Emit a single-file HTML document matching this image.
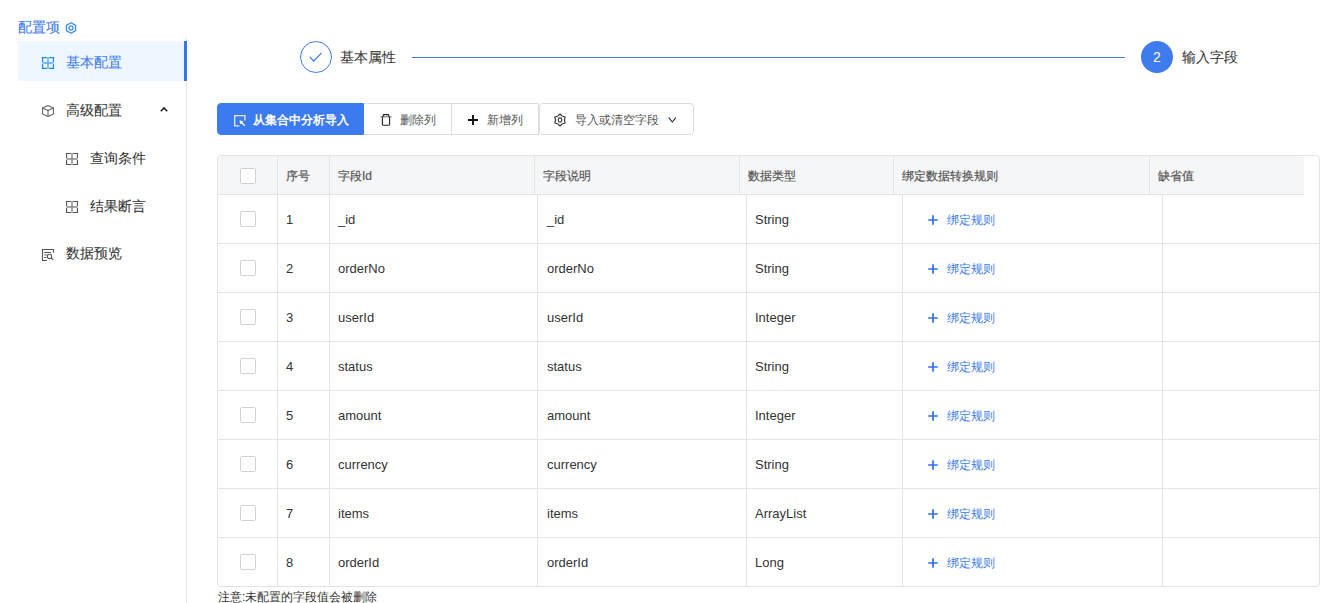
<!DOCTYPE html>
<html><head><meta charset="utf-8">
<style>
*{box-sizing:border-box;margin:0;padding:0}
html,body{width:1332px;height:603px;overflow:hidden;background:#fff;font-family:"Liberation Sans",sans-serif;color:#333}
.abs{position:absolute}
.t{position:absolute;white-space:nowrap;line-height:1}
.ico{position:absolute;overflow:visible}
.mi{font-size:14px;color:#333;-webkit-text-stroke:0.06px currentColor}
.btn{position:absolute;top:103px;height:32px;border:1px solid #dcdcdc;background:#fff}
.hl{position:absolute;background:#e4e4e4}
.th{font-size:12px;color:#555;-webkit-text-stroke:0.2px #555}
.td{font-size:13px;color:#333}
.cb{position:absolute;width:16px;height:16px;border:1px solid #d2d2d2;border-radius:2px;background:#fff}
.link{font-size:12px;color:#3d7bee}
</style></head><body>
<div class="t" style="left:18px;top:20px;font-size:14px;color:#3a7bf0;-webkit-text-stroke:0.1px #3a7bf0">配置项</div>
<svg class="ico" style="left:65px;top:22px" width="12" height="12" viewBox="0 0 12 12"><g fill="none" stroke="#3a8bf5" stroke-width="1.3" stroke-linejoin="round"><path d="M6 0.8 L10.6 3.4 V8.6 L6 11.2 L1.4 8.6 V3.4 Z"/><circle cx="6" cy="6" r="2.1"/></g></svg>
<div class="abs" style="left:18px;top:41px;width:166px;height:40px;background:#eef6ff"></div>
<div class="abs" style="left:186px;top:37px;width:1px;height:566px;background:#e8e8e8"></div>
<div class="abs" style="left:184px;top:41px;width:3px;height:40px;background:#3475f1"></div>
<svg class="ico" style="left:42px;top:57px" width="12" height="12" viewBox="0 0 12 12"><g fill="none" stroke="#1f8cf0" stroke-width="1.3"><path d="M0.55 5.3 V0.55 H5.3 M6.7 0.55 H11.45 V5.3 M11.45 6.7 V11.45 H6.7 M5.3 11.45 H0.55 V6.7"/><path d="M6 0.8 V11.2 M0.8 6 H11.2" stroke-width="1.5" opacity="0.7"/></g></svg>
<div class="t mi" style="left:66px;top:55px;color:#3a7bf0">基本配置</div>
<svg class="ico" style="left:42px;top:105px" width="12" height="12" viewBox="0 0 12 12"><g fill="none" stroke="#666" stroke-width="1.1" stroke-linejoin="round"><path d="M6 0.6 L11.4 3.1 V8.9 L6 11.4 L0.6 8.9 V3.1 Z"/><path d="M0.6 3.1 L6 5.6 L11.4 3.1 M6 5.6 V11.4"/></g></svg>
<div class="t mi" style="left:66px;top:103px">高级配置</div>
<svg class="ico" style="left:160px;top:107px" width="8" height="5" viewBox="0 0 8 5"><path d="M0.8 4.2 L4 1 L7.2 4.2" fill="none" stroke="#222" stroke-width="1.6"/></svg>
<svg class="ico" style="left:66px;top:153px" width="12" height="12" viewBox="0 0 12 12"><g fill="none" stroke="#555" stroke-width="1.1"><path d="M0.55 5.3 V0.55 H5.3 M6.7 0.55 H11.45 V5.3 M11.45 6.7 V11.45 H6.7 M5.3 11.45 H0.55 V6.7"/><path d="M6 0.8 V11.2 M0.8 6 H11.2" stroke-width="1.5" opacity="0.7"/></g></svg>
<div class="t mi" style="left:90px;top:151px">查询条件</div>
<svg class="ico" style="left:66px;top:201px" width="12" height="12" viewBox="0 0 12 12"><g fill="none" stroke="#555" stroke-width="1.1"><path d="M0.55 5.3 V0.55 H5.3 M6.7 0.55 H11.45 V5.3 M11.45 6.7 V11.45 H6.7 M5.3 11.45 H0.55 V6.7"/><path d="M6 0.8 V11.2 M0.8 6 H11.2" stroke-width="1.5" opacity="0.7"/></g></svg>
<div class="t mi" style="left:90px;top:199px">结果断言</div>
<svg class="ico" style="left:42px;top:249px" width="12" height="12" viewBox="0 0 12 12"><g fill="none" stroke="#555" stroke-width="1.1"><path d="M11.5 3.6 V0.5 H0.5 V11.5 H5"/><path d="M2.3 3.5 H9.2 M2.3 5.9 H4.7 M2.3 8.5 H4.2" stroke-width="1"/><circle cx="7.5" cy="7.4" r="2.2"/><path d="M9.1 9.0 L11.3 11.2"/></g></svg>
<div class="t mi" style="left:66px;top:246px">数据预览</div>
<div class="abs" style="left:300px;top:41px;width:32px;height:32px;border:1px solid #3f7df2;border-radius:50%"></div>
<svg class="ico" style="left:309px;top:52px" width="14" height="10" viewBox="0 0 14 10"><path d="M0.8 4.8 L4.6 9 L12.6 0.8" fill="none" stroke="#3f7df2" stroke-width="1.2"/></svg>
<div class="t mi" style="left:340px;top:50px">基本属性</div>
<div class="abs" style="left:412px;top:57px;width:713px;height:1px;background:#3d7bee"></div>
<div class="abs" style="left:1141px;top:41px;width:32px;height:32px;background:#3d7bee;border-radius:50%"></div>
<div class="t" style="left:1141px;top:50px;width:32px;text-align:center;font-size:14px;color:#fff">2</div>
<div class="t mi" style="left:1182px;top:50px">输入字段</div>
<div class="btn" style="left:217px;width:147px;background:#3c7bef;border-color:#3c7bef;border-radius:4px 0 0 4px"></div>
<div class="btn" style="left:364px;width:88px;border-left:none"></div>
<div class="btn" style="left:451px;width:88px"></div>
<div class="btn" style="left:539px;width:155px;border-radius:4px"></div>
<svg class="ico" style="left:233.5px;top:114.5px" width="12" height="12" viewBox="0 0 12 12"><g fill="none" stroke="#fff" stroke-width="1.3" opacity="0.85"><path d="M5.5 10.9 H0.7 V0.7 H10.9 V5.4"/></g><g fill="none" stroke="#fff" stroke-width="1.3"><path d="M6.6 6.6 L10.8 10.8"/><path d="M5.8 5.8 L9 6.6 L6.6 9 Z" fill="#fff" stroke-width="0.6"/></g></svg>
<div class="t" style="left:253px;top:114px;font-size:12px;color:#fff;font-weight:bold">从集合中分析导入</div>
<svg class="ico" style="left:380px;top:114px" width="12" height="12" viewBox="0 0 12 12"><g fill="none" stroke="#222" stroke-width="1.1"><path d="M0.4 2.8 H11.6" stroke="#777"/><path d="M3.3 2.8 V1.2 Q3.3 0.6 3.9 0.6 H8.1 Q8.7 0.6 8.7 1.2 V2.8"/><path d="M2.4 2.8 V10.6 Q2.4 11.2 3 11.2 H9 Q9.6 11.2 9.6 10.6 V2.8"/></g></svg>
<div class="t" style="left:400px;top:114px;font-size:12px;color:#555">删除列</div>
<svg class="ico" style="left:468px;top:115px" width="10" height="10" viewBox="0 0 10 10"><path d="M5 0 V10 M0 5 H10" stroke="#111" stroke-width="1.9"/></svg>
<div class="t" style="left:487px;top:114px;font-size:12px;color:#555">新增列</div>
<svg class="ico" style="left:554px;top:114px" width="12" height="12" viewBox="0 0 12 12"><g fill="none" stroke="#333" stroke-width="1.1" stroke-linejoin="round"><path d="M6.00 0.00 L8.20 2.19 L11.20 3.00 L10.40 6.00 L11.20 9.00 L8.20 9.81 L6.00 12.00 L3.80 9.81 L0.80 9.00 L1.60 6.00 L0.80 3.00 L3.80 2.19 Z"/><rect x="4.3" y="3.9" width="3.4" height="4.2" rx="1.6"/></g></svg>
<div class="t" style="left:575px;top:114px;font-size:12px;color:#555">导入或清空字段</div>
<svg class="ico" style="left:667.5px;top:117px" width="9" height="6" viewBox="0 0 9 6"><path d="M0.7 0.7 L4.3 5 L7.9 0.7" fill="none" stroke="#222" stroke-width="1.1"/></svg>
<div class="abs" style="left:217px;top:155px;width:1103px;height:432px;border:1px solid #e3e3e3;border-radius:4px"></div>
<div class="abs" style="left:218px;top:156px;width:1086px;height:38px;background:#f5f6f8;border-radius:3px 3px 0 0"></div>
<div class="hl" style="left:277px;top:156px;width:1px;height:38px"></div>
<div class="hl" style="left:329px;top:156px;width:1px;height:38px"></div>
<div class="hl" style="left:534px;top:156px;width:1px;height:38px"></div>
<div class="hl" style="left:739px;top:156px;width:1px;height:38px"></div>
<div class="hl" style="left:893px;top:156px;width:1px;height:38px"></div>
<div class="hl" style="left:1149px;top:156px;width:1px;height:38px"></div>
<div class="hl" style="left:218px;top:194px;width:1086px;height:1px"></div>
<div class="cb" style="left:240px;top:168px"></div>
<div class="t th" style="left:286px;top:170px">序号</div>
<div class="t th" style="left:338px;top:170px">字段Id</div>
<div class="t th" style="left:543px;top:170px">字段说明</div>
<div class="t th" style="left:748px;top:170px">数据类型</div>
<div class="t th" style="left:902px;top:170px">绑定数据转换规则</div>
<div class="t th" style="left:1158px;top:170px">缺省值</div>
<div class="hl" style="left:277px;top:195px;width:1px;height:391px"></div>
<div class="hl" style="left:329px;top:195px;width:1px;height:391px"></div>
<div class="hl" style="left:537px;top:195px;width:1px;height:391px"></div>
<div class="hl" style="left:746px;top:195px;width:1px;height:391px"></div>
<div class="hl" style="left:902px;top:195px;width:1px;height:391px"></div>
<div class="hl" style="left:1162px;top:195px;width:1px;height:391px"></div>
<div class="hl" style="left:218px;top:243px;width:1101px;height:1px"></div>
<div class="hl" style="left:218px;top:292px;width:1101px;height:1px"></div>
<div class="hl" style="left:218px;top:341px;width:1101px;height:1px"></div>
<div class="hl" style="left:218px;top:390px;width:1101px;height:1px"></div>
<div class="hl" style="left:218px;top:439px;width:1101px;height:1px"></div>
<div class="hl" style="left:218px;top:488px;width:1101px;height:1px"></div>
<div class="hl" style="left:218px;top:537px;width:1101px;height:1px"></div>
<div class="cb" style="left:240px;top:211px"></div>
<div class="t td" style="left:286px;top:213px">1</div>
<div class="t td" style="left:338px;top:213px">_id</div>
<div class="t td" style="left:547px;top:213px">_id</div>
<div class="t td" style="left:755px;top:213px">String</div>
<svg class="ico" style="left:928px;top:215px" width="10" height="10" viewBox="0 0 10 10"><path d="M5 0.2 V9.8 M0.2 5 H9.8" stroke="#2f6ff0" stroke-width="1.7"/></svg>
<div class="t link" style="left:947px;top:214px">绑定规则</div>
<div class="cb" style="left:240px;top:260px"></div>
<div class="t td" style="left:286px;top:262px">2</div>
<div class="t td" style="left:338px;top:262px">orderNo</div>
<div class="t td" style="left:547px;top:262px">orderNo</div>
<div class="t td" style="left:755px;top:262px">String</div>
<svg class="ico" style="left:928px;top:264px" width="10" height="10" viewBox="0 0 10 10"><path d="M5 0.2 V9.8 M0.2 5 H9.8" stroke="#2f6ff0" stroke-width="1.7"/></svg>
<div class="t link" style="left:947px;top:263px">绑定规则</div>
<div class="cb" style="left:240px;top:309px"></div>
<div class="t td" style="left:286px;top:311px">3</div>
<div class="t td" style="left:338px;top:311px">userId</div>
<div class="t td" style="left:547px;top:311px">userId</div>
<div class="t td" style="left:755px;top:311px">Integer</div>
<svg class="ico" style="left:928px;top:313px" width="10" height="10" viewBox="0 0 10 10"><path d="M5 0.2 V9.8 M0.2 5 H9.8" stroke="#2f6ff0" stroke-width="1.7"/></svg>
<div class="t link" style="left:947px;top:312px">绑定规则</div>
<div class="cb" style="left:240px;top:358px"></div>
<div class="t td" style="left:286px;top:360px">4</div>
<div class="t td" style="left:338px;top:360px">status</div>
<div class="t td" style="left:547px;top:360px">status</div>
<div class="t td" style="left:755px;top:360px">String</div>
<svg class="ico" style="left:928px;top:362px" width="10" height="10" viewBox="0 0 10 10"><path d="M5 0.2 V9.8 M0.2 5 H9.8" stroke="#2f6ff0" stroke-width="1.7"/></svg>
<div class="t link" style="left:947px;top:361px">绑定规则</div>
<div class="cb" style="left:240px;top:407px"></div>
<div class="t td" style="left:286px;top:409px">5</div>
<div class="t td" style="left:338px;top:409px">amount</div>
<div class="t td" style="left:547px;top:409px">amount</div>
<div class="t td" style="left:755px;top:409px">Integer</div>
<svg class="ico" style="left:928px;top:411px" width="10" height="10" viewBox="0 0 10 10"><path d="M5 0.2 V9.8 M0.2 5 H9.8" stroke="#2f6ff0" stroke-width="1.7"/></svg>
<div class="t link" style="left:947px;top:410px">绑定规则</div>
<div class="cb" style="left:240px;top:456px"></div>
<div class="t td" style="left:286px;top:458px">6</div>
<div class="t td" style="left:338px;top:458px">currency</div>
<div class="t td" style="left:547px;top:458px">currency</div>
<div class="t td" style="left:755px;top:458px">String</div>
<svg class="ico" style="left:928px;top:460px" width="10" height="10" viewBox="0 0 10 10"><path d="M5 0.2 V9.8 M0.2 5 H9.8" stroke="#2f6ff0" stroke-width="1.7"/></svg>
<div class="t link" style="left:947px;top:459px">绑定规则</div>
<div class="cb" style="left:240px;top:505px"></div>
<div class="t td" style="left:286px;top:507px">7</div>
<div class="t td" style="left:338px;top:507px">items</div>
<div class="t td" style="left:547px;top:507px">items</div>
<div class="t td" style="left:755px;top:507px">ArrayList</div>
<svg class="ico" style="left:928px;top:509px" width="10" height="10" viewBox="0 0 10 10"><path d="M5 0.2 V9.8 M0.2 5 H9.8" stroke="#2f6ff0" stroke-width="1.7"/></svg>
<div class="t link" style="left:947px;top:508px">绑定规则</div>
<div class="cb" style="left:240px;top:554px"></div>
<div class="t td" style="left:286px;top:556px">8</div>
<div class="t td" style="left:338px;top:556px">orderId</div>
<div class="t td" style="left:547px;top:556px">orderId</div>
<div class="t td" style="left:755px;top:556px">Long</div>
<svg class="ico" style="left:928px;top:558px" width="10" height="10" viewBox="0 0 10 10"><path d="M5 0.2 V9.8 M0.2 5 H9.8" stroke="#2f6ff0" stroke-width="1.7"/></svg>
<div class="t link" style="left:947px;top:557px">绑定规则</div>
<div class="t" style="left:218px;top:591px;font-size:12px;color:#333">注意:未配置的字段值会被删除</div>
</body></html>
